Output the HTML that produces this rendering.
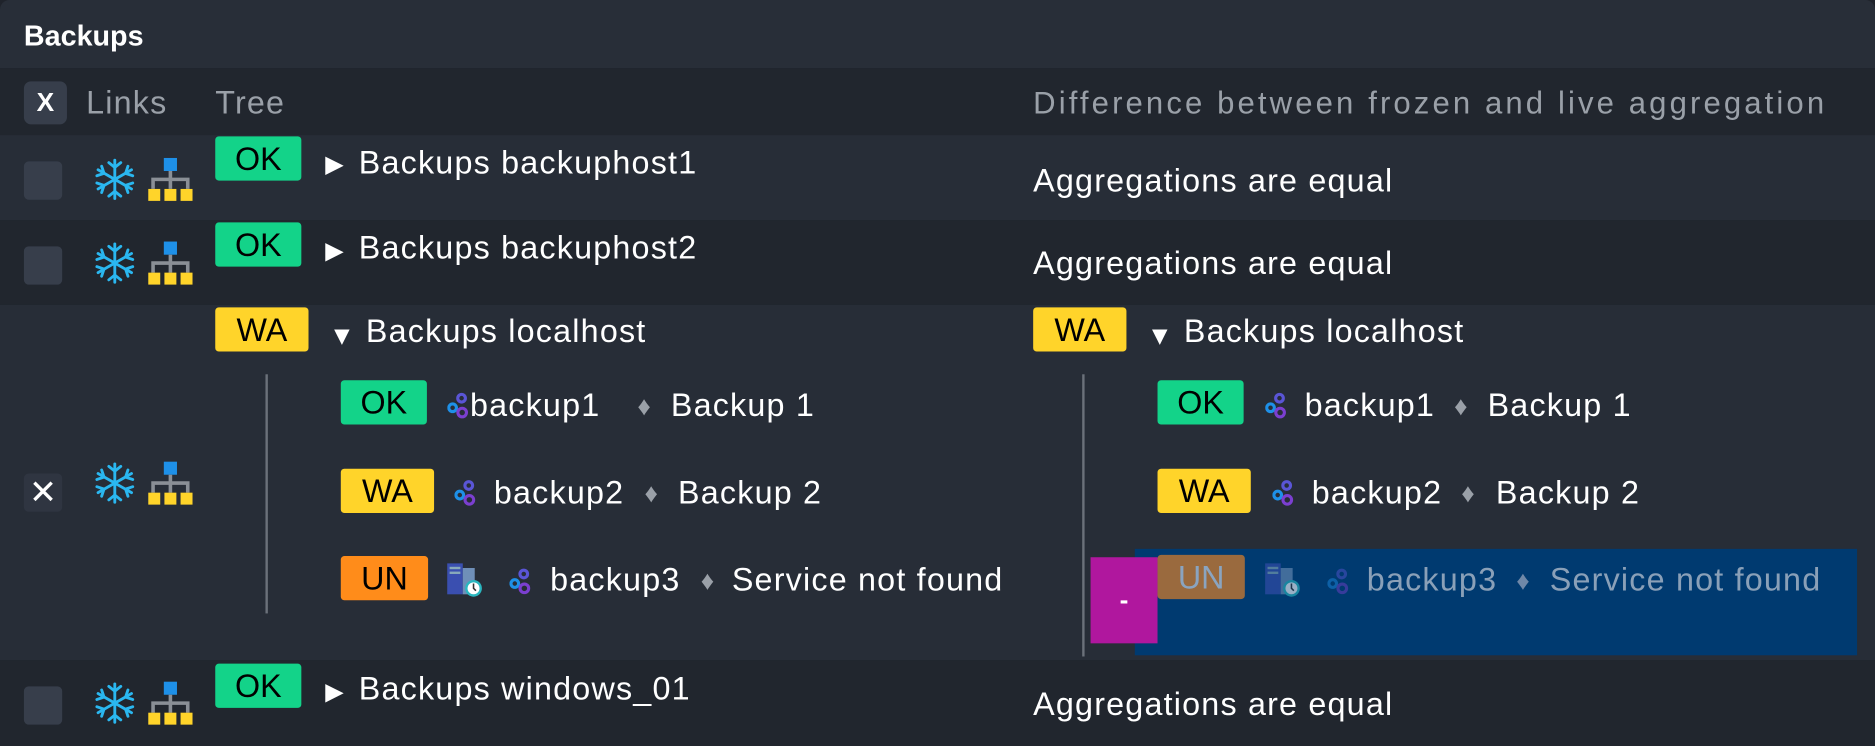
<!DOCTYPE html>
<html><head><meta charset="utf-8">
<style>
html,body{margin:0;padding:0;width:1875px;height:746px;overflow:hidden;background:#1f232b;}
#s{position:absolute;left:0;top:0;width:1568px;height:624px;transform:scale(1.19579);transform-origin:0 0;font-family:"Liberation Sans",sans-serif;color:#fff;}
.a{position:absolute;}
.t{position:absolute;font-size:27px;letter-spacing:1px;white-space:nowrap;line-height:30px;}
.b{position:absolute;color:#000;font-size:27px;text-align:center;border-radius:3px;line-height:39px;height:37px;}
.ok{background:#13d389;}
.wa{background:#ffd42a;}
.un{background:#ff8c1a;}
.cb{position:absolute;left:20px;width:32px;height:32px;background:#373e4b;border-radius:4px;}
.dia{position:absolute;color:#9aa0a8;font-size:22px;line-height:30px;}
</style></head><body>
<div id="s">
<div class="a" style="left:0;top:0;width:1568px;height:57px;background:#282e38;border-radius:8px 8px 0 0"></div>
<div class="t" style="left:20px;top:16px;font-weight:bold;font-size:24px;letter-spacing:0">Backups</div>
<div class="a" style="left:0;top:57px;width:1568px;height:56px;background:#21262e"></div>
<div class="a" style="left:20px;top:68px;width:36px;height:36px;background:#373e4b;border-radius:6px;text-align:center;line-height:36px;font-size:22px;font-weight:bold">X</div>
<div class="t" style="left:72px;top:71px;color:#9aa0a8">Links</div>
<div class="t" style="left:180px;top:71px;color:#9aa0a8">Tree</div>
<div class="t" style="left:864px;top:71px;color:#9aa0a8;font-size:26px;letter-spacing:2.6px">Difference between frozen and live aggregation</div>

<div class="a" style="left:0;top:113px;width:1568px;height:71px;background:#272d37"></div>
<div class="a" style="left:0;top:184px;width:1568px;height:71px;background:#21262e"></div>
<div class="a" style="left:0;top:255px;width:1568px;height:297px;background:#272d37"></div>
<div class="a" style="left:0;top:552px;width:1568px;height:72px;background:#21262e"></div>

<svg width="0" height="0" style="position:absolute"><defs>
<g id="snow" stroke="#2ab7f0" stroke-width="2.4" fill="none" stroke-linecap="round">
<path d="M18 2V34M4 10L32 26M4 26L32 10"/>
<path d="M13 4L18 8L23 4M13 32L18 28L23 32M3 15L9 13L7 7M33 21L27 23L29 29M3 21L9 23L7 29M33 15L27 13L29 7"/>
</g>
<g id="tree"><rect x="15" y="0" width="11" height="11" fill="#1e90e8"/><path d="M20.5 11V18M6 26V18H35V26M20.5 18V26" stroke="#8a8f96" stroke-width="3" fill="none"/><rect x="2" y="26" width="10" height="10" fill="#ffd42a"/><rect x="15.5" y="26" width="10" height="10" fill="#ffd42a"/><rect x="29" y="26" width="10" height="10" fill="#ffd42a"/></g>
<g id="gear"><circle cx="12" cy="5" r="3.2" fill="none" stroke="#5a55d6" stroke-width="2.6"/><circle cx="4.5" cy="13" r="3.2" fill="none" stroke="#1e90e8" stroke-width="2.6"/><circle cx="12.5" cy="17" r="3.6" fill="none" stroke="#7b3fd0" stroke-width="2.6"/></g>
<g id="srv"><rect x="1" y="0" width="13" height="26" fill="#3a4fb0"/><rect x="3" y="3" width="9" height="2" fill="#8ab"/><rect x="3" y="7" width="9" height="2" fill="#8ab"/><rect x="14" y="4" width="10" height="22" fill="#6f8fb8"/><circle cx="23" cy="21" r="7" fill="#2ab7c0"/><circle cx="23" cy="21" r="5" fill="#fff"/><path d="M23 17V21L25 23" stroke="#333" stroke-width="1.3" fill="none"/></g>
</defs></svg>

<!-- row1 -->
<div class="cb" style="top:135px"></div>
<svg class="a" style="left:78px;top:132px" width="36" height="36"><use href="#snow"/></svg>
<svg class="a" style="left:122px;top:132px" width="42" height="38"><use href="#tree"/></svg>
<div class="b ok" style="left:180px;top:114px;width:72px">OK</div>
<div class="t" style="left:272px;top:123px;font-size:20px">▶</div>
<div class="t" style="left:300px;top:121px">Backups backuphost1</div>
<div class="t" style="left:864px;top:136px">Aggregations are equal</div>

<!-- row2 -->
<div class="cb" style="top:206px"></div>
<svg class="a" style="left:78px;top:202px" width="36" height="36"><use href="#snow"/></svg>
<svg class="a" style="left:122px;top:202px" width="42" height="38"><use href="#tree"/></svg>
<div class="b ok" style="left:180px;top:186px;width:72px">OK</div>
<div class="t" style="left:272px;top:195px;font-size:20px">▶</div>
<div class="t" style="left:300px;top:192px">Backups backuphost2</div>
<div class="t" style="left:864px;top:205px">Aggregations are equal</div>

<!-- row3 -->
<div class="cb" style="top:396px;text-align:center;line-height:32px;font-size:28px;background:#2f3541">✕</div>
<svg class="a" style="left:78px;top:386px" width="36" height="36"><use href="#snow"/></svg>
<svg class="a" style="left:122px;top:386px" width="42" height="38"><use href="#tree"/></svg>
<div class="b wa" style="left:180px;top:257px;width:78px">WA</div>
<div class="t" style="left:275px;top:266px;font-size:22px">▼</div>
<div class="t" style="left:306px;top:262px">Backups localhost</div>
<div class="a" style="left:222px;top:313px;width:2px;height:200px;background:#6b717a"></div>

<div class="b ok" style="left:285px;top:318px;width:72px">OK</div>
<svg class="a" style="left:374px;top:328px" width="18" height="22"><use href="#gear"/></svg>
<div class="t" style="left:393px;top:324px">backup1</div><div class="dia" style="left:533px;top:325px">♦</div><div class="t" style="left:561px;top:324px">Backup 1</div>
<div class="b wa" style="left:285px;top:392px;width:78px">WA</div>
<svg class="a" style="left:380px;top:401px" width="18" height="22"><use href="#gear"/></svg>
<div class="t" style="left:413px;top:397px">backup2</div><div class="dia" style="left:539px;top:398px">♦</div><div class="t" style="left:567px;top:397px">Backup 2</div>
<div class="b un" style="left:285px;top:465px;width:73px">UN</div>
<svg class="a" style="left:373px;top:471px" width="32" height="30"><use href="#srv"/></svg>
<svg class="a" style="left:426px;top:475px" width="18" height="22"><use href="#gear"/></svg>
<div class="t" style="left:460px;top:470px">backup3</div><div class="dia" style="left:586px;top:471px">♦</div><div class="t" style="left:612px;top:470px">Service not found</div>

<div class="b wa" style="left:864px;top:257px;width:78px">WA</div>
<div class="t" style="left:959px;top:266px;font-size:22px">▼</div>
<div class="t" style="left:990px;top:262px">Backups localhost</div>
<div class="a" style="left:905px;top:313px;width:2px;height:236px;background:#6b717a"></div>
<div class="b ok" style="left:968px;top:318px;width:72px">OK</div>
<svg class="a" style="left:1058px;top:328px" width="18" height="22"><use href="#gear"/></svg>
<div class="t" style="left:1091px;top:324px">backup1</div><div class="dia" style="left:1216px;top:325px">♦</div><div class="t" style="left:1244px;top:324px">Backup 1</div>
<div class="b wa" style="left:968px;top:392px;width:78px">WA</div>
<svg class="a" style="left:1064px;top:401px" width="18" height="22"><use href="#gear"/></svg>
<div class="t" style="left:1097px;top:397px">backup2</div><div class="dia" style="left:1222px;top:398px">♦</div><div class="t" style="left:1251px;top:397px">Backup 2</div>
<div class="a" style="left:949px;top:459px;width:604px;height:89px;background:#003a70"></div>
<div class="a" style="left:912px;top:466px;width:56px;height:72px;background:#b0179e;text-align:center;line-height:72px;font-size:22px;font-weight:bold">-</div>
<div class="b" style="left:968px;top:464px;width:73px;background:#9a6a3e;color:#8aa4c0">UN</div>
<svg class="a" style="left:1057px;top:471px;opacity:.6" width="32" height="30"><use href="#srv"/></svg>
<svg class="a" style="left:1110px;top:475px;opacity:.45" width="18" height="22"><use href="#gear"/></svg>
<div class="t" style="left:1143px;top:470px;color:#8aa0b8">backup3</div><div class="dia" style="left:1268px;top:471px;color:#6f88a8">♦</div><div class="t" style="left:1296px;top:470px;color:#8aa0b8">Service not found</div>

<!-- row4 -->
<div class="cb" style="top:574px"></div>
<svg class="a" style="left:78px;top:570px" width="36" height="36"><use href="#snow"/></svg>
<svg class="a" style="left:122px;top:570px" width="42" height="38"><use href="#tree"/></svg>
<div class="b ok" style="left:180px;top:555px;width:72px">OK</div>
<div class="t" style="left:272px;top:564px;font-size:20px">▶</div>
<div class="t" style="left:300px;top:561px">Backups windows_01</div>
<div class="t" style="left:864px;top:574px">Aggregations are equal</div>
</div>
</body></html>
